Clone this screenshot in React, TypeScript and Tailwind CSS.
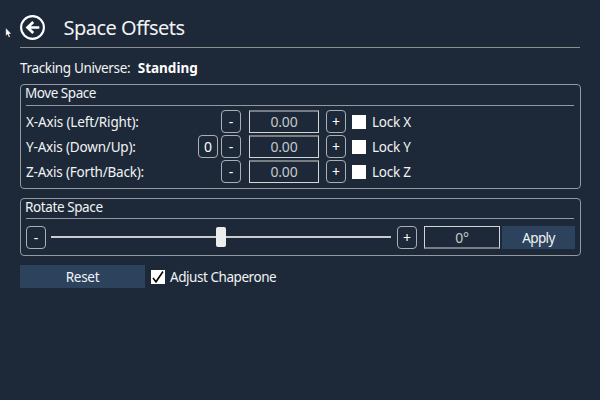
import React from "react";

const SquareButton = ({ children, className = "" }: { children: string; className?: string }) => (
  <button className={`flex h-[23px] w-5 shrink-0 items-center justify-center rounded-[4px] border border-[#a9afb5] pt-px text-[14px] leading-none text-white ${className}`}>
    {children}
  </button>
);

const Title = ({ children, className }: { children: string; className: string }) => (
  <div className={`w-[548px] whitespace-nowrap border-b border-[#929a9f] text-[13.5px] leading-[17px] ${className}`}>
    <span className="-ml-px">{children}</span>
  </div>
);

const axes = [
  { label: "X-Axis (Left/Right):", lock: "Lock X", zero: false, spacing: "tracking-[-0.15px]" },
  { label: "Y-Axis (Down/Up):", lock: "Lock Y", zero: true, spacing: "tracking-[-0.18px]" },
  { label: "Z-Axis (Forth/Back):", lock: "Lock Z", zero: false, spacing: "tracking-[-0.2px]" },
];

export default function App() {
  return (
    <main className="relative h-[400px] w-[600px] overflow-hidden bg-[#1d2938] px-5 font-['Noto_Sans',sans-serif] text-[13.5px] text-[#f2f3f4]">
      <svg className="absolute left-[5px] top-[27px] h-[12px] w-[8px]" viewBox="0 0 8 12">
        <path d="M.7.8v8.3l1.8-1.6 1.3 3 1.5-.7L4 7.1h2.5z" fill="#fff" stroke="#05080c" strokeWidth=".4" />
      </svg>
      <header className="flex h-12 items-center border-b border-[#89908f] pt-[8px]">
        <svg className="h-[26px] w-[26px] shrink-0" viewBox="0 0 26 26" fill="none" stroke="#fff">
          <circle cx="12.5" cy="12.5" r="11.4" strokeWidth="2.1" />
          <path d="M19.3 12.5H7.5M13.2 7l-5.7 5.5 5.7 5.5" strokeWidth="2.7" />
        </svg>
        <h1 className="ml-[17.5px] whitespace-nowrap text-[20px] leading-6 tracking-[-0.5px]">Space Offsets</h1>
      </header>
      <p className="flex h-9 items-center gap-[7.5px] whitespace-nowrap pt-[4px]">
        <span className="tracking-[-0.35px]">Tracking Universe:</span>
        <b className="text-white">Standing</b>
      </p>

      <section className="h-[105px] w-[561px] rounded-[4px] border border-[#929a9f] px-[5px]">
        <Title className="h-[21px] tracking-[-0.45px]">Move Space</Title>
        <div className="flex flex-col gap-[2px] pt-[4px]">
          {axes.map((a) => (
            <div key={a.lock} className="flex h-[23px] items-center whitespace-nowrap">
              <span className={`w-[172px] pt-[2px] ${a.spacing}`}>{a.label}</span>
              {a.zero ? <SquareButton>0</SquareButton> : <span className="w-5" />}
              <SquareButton className="ml-[3px]">-</SquareButton>
              <div className="ml-2 flex h-[23px] w-[70px] items-center justify-center border border-t-2 border-[#d4d6d4] border-t-[#777d83] text-[14px] leading-[18px] tracking-[-0.2px] text-[#c4c8cc]">0.00</div>
              <SquareButton className="ml-[7px]">+</SquareButton>
              <span className="ml-[6px] h-[14px] w-[14px] bg-white" />
              <span className="ml-[6px] pt-[2px] tracking-[-0.25px]">{a.lock}</span>
            </div>
          ))}
        </div>
      </section>

      <section className="mt-[9px] h-[58px] w-[561px] rounded-[4px] border border-[#929a9f] px-[5px]">
        <Title className="h-5 tracking-[-0.4px]">Rotate Space</Title>
        <div className="mt-[7px] flex h-[23px] items-center">
          <SquareButton>-</SquareButton>
          <div className="mb-px ml-[5px] flex h-5 w-[340px] items-center self-start pt-px">
            <span className="h-[2px] w-[165px] bg-[#c9cccc]" />
            <span className="h-5 w-[10px] rounded-[2px] bg-[#ededed]" />
            <span className="h-[2px] flex-1 bg-[#c9cccc]" />
          </div>
          <SquareButton className="ml-[6px]">+</SquareButton>
          <div className="ml-[7px] flex h-[23px] w-[76px] items-center justify-center border border-b-2 border-[#d4d6d4] border-b-[#777d83] text-[14px] tracking-[-0.3px] text-[#c4c8cc]">0°</div>
          <button className="ml-[2px] h-[23px] w-[73px] bg-[#2c425d] pt-px tracking-[-0.6px]">Apply</button>
        </div>
      </section>

      <footer className="mt-[9px] flex h-[23px] items-center whitespace-nowrap">
        <button className="h-[23px] w-[125px] bg-[#2c425d] pt-px tracking-[-0.3px]">Reset</button>
        <span className="ml-[6px] flex h-[14px] w-[14px] bg-white">
          <svg viewBox="0 0 14 14" fill="none" stroke="#080808" strokeWidth="1.6">
            <path d="M2 8l3 3.8L12 1.5" />
          </svg>
        </span>
        <span className="ml-[5px] pt-px tracking-[-0.45px]">Adjust Chaperone</span>
      </footer>
    </main>
  );
}
